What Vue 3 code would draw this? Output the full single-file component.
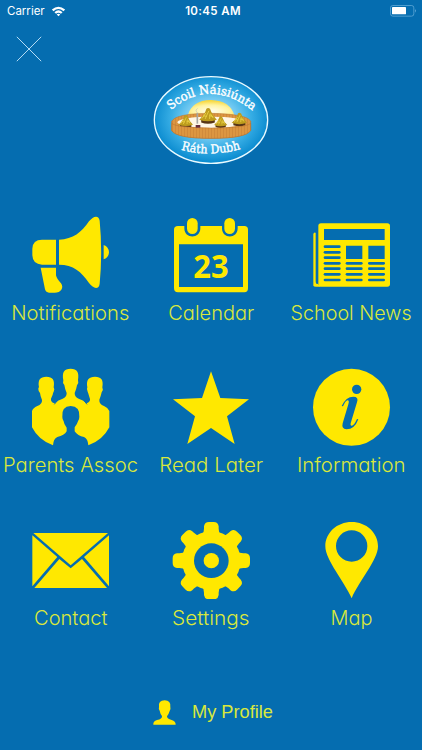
<script setup>
const tiles = [
  { id: 'notifications', label: 'Notifications', box: '96 33 234 234', x: 11.3, w: 118 },
  { id: 'calendar', label: 'Calendar', box: '93 33 234 234', x: 27.3, w: 86 },
  { id: 'news', label: 'School News', box: '96 33 234 234', x: 9.6, w: 121 },
  { id: 'parents', label: 'Parents Assoc', box: '96 24 234 234', x: 3, w: 135 },
  { id: 'later', label: 'Read Later', box: '93 24 234 234', x: 18.2, w: 104 },
  { id: 'information', label: 'Information', box: '96 24 234 234', x: 16, w: 108.5 },
  { id: 'contact', label: 'Contact', box: '96 33 234 234', x: 34, w: 73.5 },
  { id: 'settings', label: 'Settings', box: '93 33 234 234', x: 31, w: 77.5 },
  { id: 'map', label: 'Map', box: '96 33 234 234', x: 49.5, w: 42 },
]
const lineRows = [125, 142, 158, 175, 191, 208, 225]
const teeth = [0, 45, 90, 135, 180, 225, 270, 315]
</script>

<template>
  <main class="screen">
    <header class="status">
      <div class="carrier">
        <span>Carrier</span>
        <svg class="wifi" viewBox="0 0 45 34">
          <path d="M2 11Q22 -7 43 11L38 16Q22 2 7 16ZM10 19Q22 8 35 19L30 24Q22 17 15 24ZM17 26Q22 22 28 26L22.500 32Z" />
        </svg>
      </div>
      <span class="time">10:45 AM</span>
      <svg class="battery" viewBox="0 0 81 36">
        <rect x="1.500" y="1.500" width="70" height="32" rx="7" fill="none" stroke="#73b5df" stroke-width="2" />
        <rect x="6" y="6" width="42" height="22" rx="2" fill="#fff" />
        <path d="M75 12q5 5 0 11z" fill="#73b5df" />
      </svg>
    </header>

    <div class="toolbar">
      <svg class="close" viewBox="0 0 26 26"><path d="M.8.800 25.200 25.200M25.200.8.800 25.200" /></svg>
    </div>

    <svg class="crest" viewBox="0 0 396 300">
      <defs>
        <radialGradient id="sky" cx="50%" cy="48%" r="53%">
          <stop offset=".3" stop-color="#8fd7f8" />
          <stop offset=".66" stop-color="#38aee5" />
          <stop offset="1" stop-color="#0587cd" />
        </radialGradient>
        <radialGradient id="sun" cx="50%" cy="70%" r="65%">
          <stop offset="0" stop-color="#fffef0" />
          <stop offset=".6" stop-color="#fff3a0" />
          <stop offset="1" stop-color="#f8d83c" />
        </radialGradient>
        <pattern id="planks" width="9" height="40" patternUnits="userSpaceOnUse">
          <rect width="9" height="40" fill="#dc9641" />
          <path d="M1 0V40" stroke="#c07a33" stroke-width="1.500" />
        </pattern>
        <path id="topArc" d="M77 120Q197 22 322 122" />
        <path id="bottomArc" d="M108 239Q198 264 293 235" />
      </defs>
      <ellipse cx="198" cy="150" rx="170" ry="130" fill="url(#sky)" stroke="#e9faff" stroke-width="4" />
      <path d="M128 138Q139 91 198 90Q256 92 269 138Z" fill="url(#sun)" />
      <path d="M80 154Q92 130 198 130Q308 132 317 154V181Q304 205 198 205Q93 205 80 181Z" fill="url(#planks)" stroke="#b6712f" stroke-width="1.500" />
      <ellipse cx="198" cy="157" rx="101" ry="17" fill="#fff6e5" />
      <g v-for="h in [[189, 137, 1.2], [122, 154, 1], [227, 156, .9], [283, 148, 1.05]]" :key="h[0]" :transform="`translate(${h[0]} ${h[1]}) scale(${h[2]})`">
        <path d="M-17 5H17V17Q0 23-17 17Z" fill="#573516" />
        <path d="M-22 10Q-9 0-4-17Q0-21 5-17Q11 0 22 10Q0 18-22 10Z" fill="#bd9c1d" />
        <path d="M-15 7-5-7M-7 8 2-12M4 8 5-5M13 6 6-5M-12 0-3 2M3 0 13 2" stroke="#e8cd42" stroke-width="2.500" />
      </g>
      <path d="M80 160Q94 173 198 174Q302 174 317 160V181Q304 205 198 205Q93 205 80 181Z" fill="url(#planks)" stroke="#b6712f" stroke-width="1.500" />
      <path d="M157 161V128" stroke="#a6a6a1" stroke-width="5" />
      <path d="M155 126Q149 120 158 115" stroke="#c4c6bb" stroke-width="2" fill="none" />
      <path d="M152 165h14v8h-14z" fill="#672b3c" />
      <text class="crest-text"><textPath href="#topArc" textLength="270" lengthAdjust="spacingAndGlyphs">Scoil Náisiúnta</textPath></text>
      <text class="crest-text"><textPath href="#bottomArc" textLength="181" lengthAdjust="spacingAndGlyphs">Ráth Dubh</textPath></text>
    </svg>

    <nav class="grid">
      <div v-for="t in tiles" :key="t.id" class="tile">
        <svg class="icon" :viewBox="t.box">
          <template v-if="t.id === 'notifications'">
            <path d="M168 104H126Q98 104 97 131V151Q98 178 126 179H168ZM177 104C220 103 244 82 267 49Q278 35 288 35Q297 35 299 47Q308 141 299 236Q297 249 288 249Q278 248 267 234C244 200 220 179 177 179ZM311 120Q326 125 327 142Q326 158 311 163ZM122 188H168V211Q170 221 183 235Q190 245 184 254Q178 263 164 263H147Q138 263 135 253Z" />
          </template>
          <template v-else-if="t.id === 'calendar'">
            <path fill-rule="evenodd" d="M111 63H130V70C130 103 178 103 178 70V63H243V70C243 103 290 103 290 70V63H310Q321 63 321 74V249Q321 262 310 262H111Q99 262 99 249V74Q99 63 111 63ZM114 118V246H306V118Z" />
            <rect x="138" y="39" width="32" height="48" rx="16" /><rect x="250" y="39" width="32" height="48" rx="16" />
            <text class="date" x="157" y="220" textLength="106" lengthAdjust="spacingAndGlyphs">23</text>
          </template>
          <template v-else-if="t.id === 'news'">
            <rect x="112" y="55" width="215" height="190" rx="8" />
            <path d="M104 84Q102 80 97 86V242Q98 245 105 245H119L110 236Q104 240 104 229Z" />
            <g class="cut">
              <path d="M129 72H311V105H129ZM195 122H244V162H195ZM262 122H311V162H262Z" />
              <rect v-for="y in lineRows" :key="y" x="128" :y="y - 4" width="51" height="8" rx="4" />
              <rect v-for="y in lineRows.slice(3)" :key="'b' + y" x="194" :y="y - 4" width="51" height="8" rx="4" />
              <rect v-for="y in lineRows.slice(3)" :key="'c' + y" x="261" :y="y - 4" width="51" height="8" rx="4" />
            </g>
          </template>
          <template v-else-if="t.id === 'parents'">
            <path d="M96 153Q99 144 112 138Q127 132 126 120Q121 108 120 99Q115 95 115 87Q115 83 117 82C113 60 120 50 139 50C158 50 165 60 161 82Q165 87 161 95Q159 98 158 104L153 116Q151 126 164 130Q175 119 188 116Q200 112 200 99Q195 88 193 75Q187 68 190 61C186 36 192 26 212 26C231 26 238 36 234 60Q237 68 231 76Q229 88 224 99Q224 112 236 116Q249 119 260 130Q271 126 270 117L266 104Q265 99 263 95Q259 88 262 82C258 60 266 50 285 50C304 50 311 60 307 82Q311 89 305 97Q303 107 298 119Q297 132 312 138Q324 143 328 153V202Q308 241 265 256Q264 237 252 231Q233 228 224 214V202Q231 194 234 184Q238 178 238 170Q240 139 212 138Q184 139 187 171Q187 179 191 184Q192 194 200 203V214Q193 227 172 231Q160 237 159 256Q116 241 96 202Z" />
            <path class="gap" d="M163 133 171 123M253 123 261 133" />
          </template>
          <path v-else-if="t.id === 'later'" d="M210 34 238 114 324 118 258 169 281 252 210 204 139 252 162 169 96 118 183 114Z" />
          <template v-else-if="t.id === 'information'">
            <circle cx="211.500" cy="142" r="115.500" />
            <g class="cut">
              <circle cx="227" cy="88" r="14" />
              <path d="M182 138Q195 110 217 110Q234 110 228 127L209 190Q207 199 213 197Q220 195 228 177L232 178Q221 208 196 208Q181 207 185 190L202 133Q206 120 199 121Q193 123 186 139Z" />
            </g>
          </template>
          <template v-else-if="t.id === 'contact'">
            <path d="M100 69H324L212 166ZM97 76 172 141 97 229ZM327 76V229L252 141ZM178 147 212 175 246 147 321 234H103Z" />
          </template>
          <template v-else-if="t.id === 'settings'">
            <circle cx="211" cy="152" r="88" />
            <path v-for="a in teeth" :key="a" :transform="`rotate(${a} 211 152)`" d="M183 76Q189 67 189 56V49Q191 36 204 36H218Q231 36 233 49V56Q233 67 239 76Z" />
            <circle class="cut" cx="211" cy="152" r="52" /><circle cx="211" cy="152" r="23" />
          </template>
          <path v-else fill-rule="evenodd" d="M212 265C190 215 133 150 133 109C133 68 168 36 212 36C256 36 291 68 291 109C291 150 233 215 212 265ZM259 108A47 47 0 1 0 165 108A47 47 0 1 0 259 108Z" />
        </svg>
        <svg class="label" viewBox="0 0 141 32">
          <text :x="t.x" y="22" :textLength="t.w" lengthAdjust="spacingAndGlyphs">{{ t.label }}</text>
        </svg>
      </div>
    </nav>

    <footer class="profile">
      <svg class="person" viewBox="38 28 69 75">
        <path d="M39 102Q38 92 50 88Q66 85 65 76Q60 71 58 60Q54 55 56 49Q53 29 73 29Q92 29 90 49Q92 56 88 61Q85 71 80 77Q80 85 94 88Q106 91 106 102Z" />
      </svg>
      <svg class="profile-text" viewBox="0 0 84 26"><text x="0" y="19" textLength="81" lengthAdjust="spacingAndGlyphs">My Profile</text></svg>
    </footer>
  </main>
</template>

<style>
body { background: #056db0; }
</style>

<style scoped>
.screen { width: 422px; height: 750px; overflow: hidden; display: flex; flex-direction: column; background: #056db0; color: #fff; font-family: Inter, "Liberation Sans", sans-serif; }
svg { display: block; flex: none; }
.status { height: 22px; box-sizing: border-box; padding: 0 5px 0 7px; display: grid; grid-template-columns: 1fr auto 1fr; align-items: center; font-size: 11.5px; }
.carrier { display: flex; align-items: center; gap: 6px; }
.wifi { width: 15px; height: 11px; fill: #fff; }
.time { padding-left: 2px; font-weight: 600; font-size: 11.5px; letter-spacing: .35px; }
.battery { width: 27px; height: 12px; justify-self: end; }
.toolbar { height: 48px; padding: 14px 16px 0; box-sizing: border-box; }
.close { width: 26px; height: 26px; stroke: #b4dcf5; stroke-width: 1; }
.crest { width: 132px; height: 100px; margin-left: 145px; }
.crest-text { fill: #fff; stroke: #fff; stroke-width: 1.2; font-family: "DejaVu Serif", serif; font-weight: 400; font-size: 37px; }
.grid { margin-top: 46px; display: grid; grid-template-columns: 141px 140px 141px; grid-template-rows: 152px 153px 152px; fill: #ffe800; }
.tile { display: flex; flex-direction: column; align-items: center; }
.icon { width: 78px; height: 78px; }
.cut { fill: #056db0; }
.gap { stroke: #056db0; stroke-width: 3; }
.date { font-family: "Open Sans", sans-serif; font-weight: 700; font-size: 94px; }
.label { width: 141px; height: 32px; margin-top: 4px; fill: #d9e83c; font-size: 19.7px; font-weight: 300; font-feature-settings: "cv11"; overflow: visible; }
.profile { margin-top: 26px; padding-left: 153px; display: flex; align-items: center; gap: 16px; fill: #ffe800; }
.person { width: 23px; height: 25px; }
.profile-text { width: 84px; height: 26px; fill: #d9e83c; font-family: "Liberation Sans", sans-serif; font-size: 17.6px; }
</style>
